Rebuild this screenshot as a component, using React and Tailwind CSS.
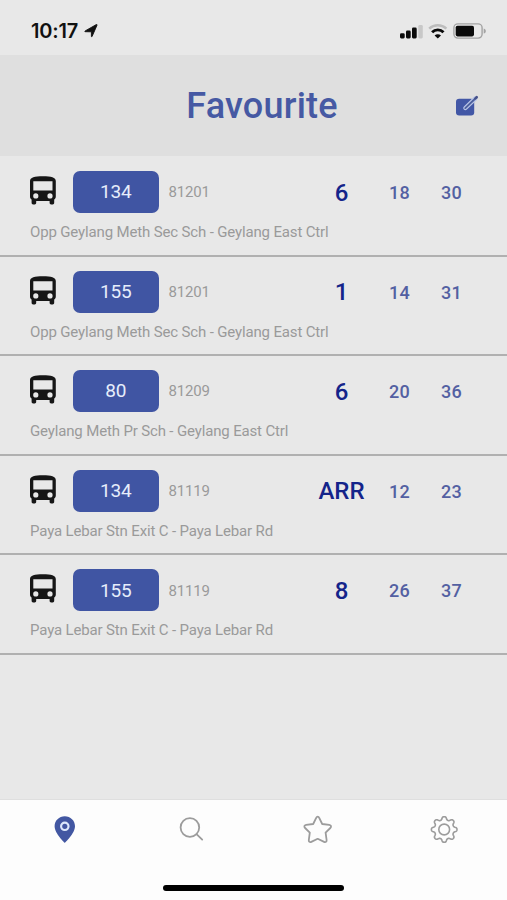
import React from 'react'

const buses = [
  { service: '134', stop: '81201', route: 'Opp Geylang Meth Sec Sch - Geylang East Ctrl', times: ['6', '18', '30'] },
  { service: '155', stop: '81201', route: 'Opp Geylang Meth Sec Sch - Geylang East Ctrl', times: ['1', '14', '31'] },
  { service: '80', stop: '81209', route: 'Geylang Meth Pr Sch - Geylang East Ctrl', times: ['6', '20', '36'] },
  { service: '134', stop: '81119', route: 'Paya Lebar Stn Exit C - Paya Lebar Rd', times: ['ARR', '12', '23'] },
  { service: '155', stop: '81119', route: 'Paya Lebar Stn Exit C - Paya Lebar Rd', times: ['8', '26', '37'] }
]

function StatusBar() {
  return (
    <div className="flex h-[55px] items-start justify-between bg-[#e8e8e8] pl-[31px] pr-[20px] pt-[21px]">
      <div className="flex h-5 items-center">
        <span className="w-[53px] font-['Inter',sans-serif] text-[20px] font-semibold leading-5 tracking-[-0.2px] text-[#111]">10:17</span>
        <svg className="h-[14px] w-[14px]" viewBox="0 0 14 14" fill="#111">
          <path d="M13 1.200 8.100 12.400c-.2.500-.7.400-.7-.1V7.800L1.300 7.700c-.6 0-.7-.5-.1-.8L12.300.6c.6-.3.9 0 .7.600z" stroke="#111" strokeWidth="0.900" strokeLinejoin="round" />
        </svg>
      </div>
      <div className="flex h-5 items-center">
        {/* Signal strength */}
        <svg className="h-4 w-[24px]" viewBox="0 0 24 16">
          <rect x="0" y="10.200" width="4.700" height="5.200" rx="1.300" fill="#0a0a0a" />
          <rect x="6" y="7.600" width="4.700" height="7.800" rx="1.300" fill="#0a0a0a" />
          <rect x="12" y="4.600" width="4.700" height="10.800" rx="1.300" fill="#0a0a0a" />
          <rect x="18.300" y="1.900" width="4.500" height="13.500" rx="1.300" fill="#c8c8c8" />
        </svg>
        {/* Wifi */}
        <svg className="ml-[4px] h-4 w-[20px]" viewBox="0 0 20 16" fill="none">
          <path d="M1.200 5.700a12.600 12.600 0 0 1 17.200 0" stroke="#bdbdbd" strokeWidth="2.400" />
          <path d="M4.100 9.300a8 8 0 0 1 11.400 0" stroke="#0a0a0a" strokeWidth="2.900" />
          <path d="m9.800 15.600-3.200-3.100a4.600 4.600 0 0 1 6.400 0z" fill="#0a0a0a" />
        </svg>
        {/* Battery */}
        <svg className="ml-[5px] h-4 w-[34px]" viewBox="0 0 34 16">
          <rect x="0.900" y="0.900" width="28.200" height="14.200" rx="4" fill="none" stroke="#a3a3a3" strokeWidth="1.400" />
          <rect x="2.700" y="2.700" width="18.300" height="10.700" rx="1.800" fill="#0a0a0a" />
          <path d="M30.700 5.400c2.800.8 2.800 4.400 0 5.200z" fill="#a3a3a3" />
        </svg>
      </div>
    </div>
  )
}

function BusIcon() {
  return (
    <svg className="-mt-[3px] h-[29px] w-[26px]" viewBox="0 0 26 29" fill="#161616">
      <path
        fillRule="evenodd"
        d="M0 5C0 1.300 4.500.200 12.900.200S25.800 1.300 25.800 5V20.500c0 1.300-.6 2.300-1.600 3.100V26.800c0 .9-.7 1.600-1.500 1.600h-1.600c-.8 0-1.500-.7-1.500-1.600v-1.900H6.200v1.900c0 .9-.7 1.600-1.500 1.600H3.100c-.8 0-1.500-.7-1.500-1.600v-3.200C.6 22.800 0 21.800 0 20.500zM3.300 5.300v9.300h19.200V5.300zM5.800 17.300a2.600 2.600 0 1 0 0 5.200 2.600 2.600 0 0 0 0-5.200zM20 17.300a2.600 2.600 0 1 0 0 5.200 2.600 2.600 0 0 0 0-5.200z"
      />
    </svg>
  )
}

function EditIcon() {
  return (
    <svg className="h-[22px] w-[24px]" viewBox="0 0 24 22">
      <rect x="1" y="3.800" width="18.200" height="16.700" rx="3.200" fill="#4257a6" />
      <path d="m10.400 13 9.800-9.400" stroke="#b9c5e6" strokeWidth="4.400" strokeLinecap="round" />
      <path d="m10.300 13.100 9.500-9.100" stroke="#4d609f" strokeWidth="1.900" strokeLinecap="round" />
      <path d="m20.400 3.400 1.300-1.200" stroke="#46518a" strokeWidth="2.600" strokeLinecap="round" />
    </svg>
  )
}

function BusRow({ bus }) {
  const [first, second, third] = bus.times
  return (
    <li className="h-[99.6px] border-b-2 border-[#b0b0b0] pt-[14px]">
      <div className="flex h-[42px] items-center pl-[30px]">
        <BusIcon />
        <div className="ml-[17px] flex h-[42px] w-[85.5px] items-center justify-center rounded-[7px] bg-[#4055a3] pt-px text-[19px] tracking-[-0.2px] text-[#e6edfb]">
          {bus.service}
        </div>
        <span className="ml-[10px] w-[132px] pt-px text-[15px] tracking-[-0.2px] text-[#9a9a9a]">{bus.stop}</span>
        <span className="w-[82px] pt-px text-center text-[24px] font-medium text-[#14248a]">{first}</span>
        <span className="w-[34px] pt-px text-center text-[18px] font-medium tracking-[0.2px] text-[#5360a2]">{second}</span>
        <span className="ml-[18px] w-[34px] pt-px text-center text-[18px] font-medium tracking-[0.2px] text-[#5360a2]">{third}</span>
      </div>
      <p className="pl-[30px] pt-[8px] text-[15px] leading-[22px] tracking-[-0.150px] text-[#9a9a9a]">{bus.route}</p>
    </li>
  )
}

function TabBar() {
  return (
    <nav className="flex h-[101px] flex-col items-center justify-between border-t border-[#dfdfdf] bg-[#fdfdfd] pb-[9.5px] pt-[15px]">
      <div className="grid w-full grid-cols-4 justify-items-center pl-px">
        <svg className="h-[30px] w-[30px]" viewBox="0 0 30 30">
          <path d="M15.800 1.200c-5.700 0-10.200 4.400-10.200 10 0 7.200 10.200 16.600 10.200 16.600S26 18.400 26 11.200c0-5.600-4.500-10-10.200-10z" fill="#4257a2" />
          <circle cx="15.800" cy="11.300" r="3.700" fill="none" stroke="#dce8fb" strokeWidth="2.200" />
        </svg>
        <svg className="h-[30px] w-[30px]" viewBox="0 0 30 30" fill="none" stroke="#9c9c9c" strokeWidth="1.800" strokeLinecap="round">
          <circle cx="13.900" cy="12.500" r="9.300" />
          <path d="m20.500 19.100 5.700 5.500" />
        </svg>
        <svg className="h-[30px] w-[30px] overflow-visible" viewBox="-0.7 0 30 30" fill="none" stroke="#9c9c9c" strokeWidth="1.800" strokeLinejoin="round">
          <path d="M13.600 2.700C14.200 1.300 15.800 1.300 16.400 2.700L19.500 9 26.600 9.800C28.500 10.100 28.900 11.800 27.600 13L22.900 17.700 23.900 25C24.100 26.800 22.900 27.600 21.400 26.900L15 23.800 8.600 26.900C7.100 27.600 5.900 26.800 6.100 25L7.100 17.700 2.400 13C1.100 11.800 1.500 10.100 3.400 9.800L10.500 9Z" />
        </svg>
        <svg className="h-[30px] w-[30px]" viewBox="-0.5 0 30 30" fill="none" stroke="#9c9c9c" strokeWidth="1.600" strokeLinejoin="round">
          <GearPath />
          <circle cx="14.700" cy="14.500" r="5.400" />
        </svg>
      </div>
      <div className="h-[6px] w-[181px] rounded-full bg-black" />
    </nav>
  )
}

// Wavy cog outline with eight rounded teeth
function GearPath() {
  const points = []
  for (let i = 0; i < 144; i++) {
    const a = (i / 144) * Math.PI * 2
    const r = 11.300 + 1.500 * Math.tanh(1.500 * Math.cos(8 * a)) / 0.9
    points.push(`${(14.700 + r * Math.cos(a)).toFixed(2)} ${(14.500 + r * Math.sin(a)).toFixed(2)}`)
  }
  return <path d={`M${points.join('L')}Z`} />
}

export default function App() {
  return (
    <div className="flex h-[900px] w-[507px] flex-col overflow-hidden bg-[#e8e8e8] font-['Roboto',sans-serif]">
      <StatusBar />
      <header className="grid h-[101px] grid-cols-[1fr_auto_1fr] items-center bg-[#dfdfdf] pl-[45px] pr-[28px]">
        <span />
        <h1 className="text-[36px] font-medium leading-none tracking-[0.200px] text-[#4659a3]">Favourite</h1>
        <div className="justify-self-end">
          <EditIcon />
        </div>
      </header>
      <ul className="flex-1 pt-px">
        {buses.map((bus, index) => (
          <BusRow key={index} bus={bus} />
        ))}
      </ul>
      <TabBar />
    </div>
  )
}
